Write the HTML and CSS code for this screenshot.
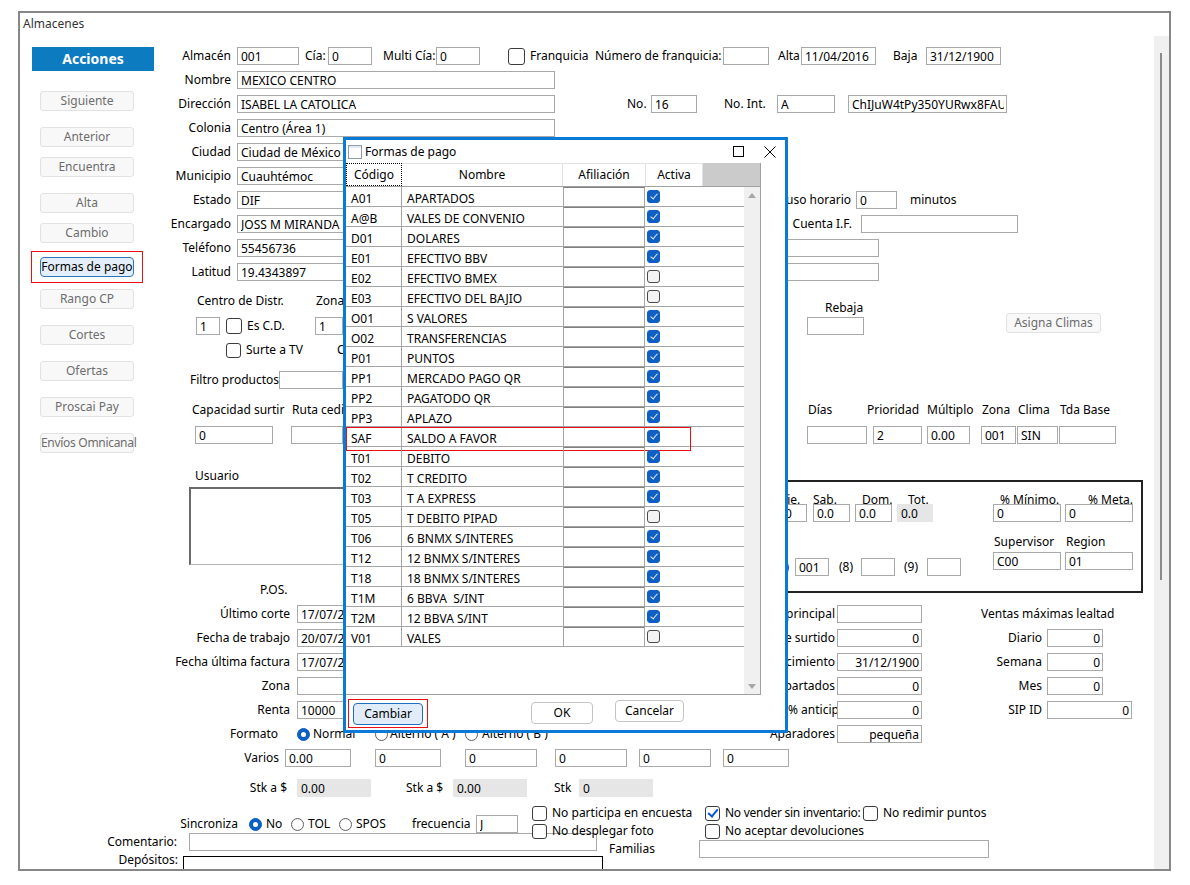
FILE: index.html
```html
<!DOCTYPE html>
<html>
  <head>
    <meta charset="utf-8" />
    <title>Almacenes</title>
    <link rel="stylesheet" href="styles.css">
  </head>
  <body>
    <div class="window">
      <div class="title">Almacenes</div>

      <div class="top">
        <!-- Left action column -->
        <div class="actions">
          <div class="actions-head">Acciones</div>
          <button class="act-btn mt20">Siguiente</button>
          <button class="act-btn mt16">Anterior</button>
          <button class="act-btn mt10">Encuentra</button>
          <button class="act-btn mt16">Alta</button>
          <button class="act-btn mt10">Cambio</button>
          <button class="act-btn focus mt14">Formas de pago</button>
          <button class="act-btn mt12">Rango CP</button>
          <button class="act-btn mt16">Cortes</button>
          <button class="act-btn mt16">Ofertas</button>
          <button class="act-btn mt16">Proscai Pay</button>
          <button class="act-btn tight mt16">Envíos Omnicanal</button>
        </div>

        <div class="form-top">
          <div class="row">
            <span class="lbl">Almacén</span>
            <input class="w62" value="001">
            <span class="txt ml6 w23">Cía:</span>
            <input class="w44" value="0">
            <span class="txt ml11 w53">Multi Cía:</span>
            <input class="w44" value="0">
            <span class="cb cb17 ml28"></span>
            <span class="txt ml5 w65">Franquicia</span>
            <span class="txt w128">Número de franquicia:</span>
            <input class="w46" value="">
            <span class="txt ml9 w23">Alta</span>
            <input class="w75" value="11/04/2016">
            <span class="txt ml17 w33">Baja</span>
            <input class="w75" value="31/12/1900">
          </div>
          <div class="row">
            <span class="lbl">Nombre</span>
            <input class="w318" value="MEXICO CENTRO">
          </div>
          <div class="row">
            <span class="lbl">Dirección</span>
            <input class="w318" value="ISABEL LA CATOLICA">
            <span class="txt ml72 w24">No.</span>
            <input class="w46" value="16">
            <span class="txt ml27 w53">No. Int.</span>
            <input class="w58" value="A">
            <input class="ml13 w159" value="ChIJuW4tPy350YURwx8FAUs">
          </div>
          <div class="row">
            <span class="lbl">Colonia</span>
            <input class="w318" value="Centro (Área 1)">
          </div>
          <div class="row">
            <span class="lbl">Ciudad</span>
            <input class="w220" value="Ciudad de México">
          </div>
          <div class="row">
            <span class="lbl">Municipio</span>
            <input class="w220" value="Cuauhtémoc">
          </div>
          <div class="row">
            <span class="lbl">Estado</span>
            <input class="w220" value="DIF">
            <span class="txt right w394">Huso horario</span>
            <input class="ml5 w41" value="0">
            <span class="txt ml13">minutos</span>
          </div>
          <div class="row">
            <span class="lbl">Encargado</span>
            <input class="w220" value="JOSS M MIRANDA">
            <span class="txt right w395">Cuenta I.F.</span>
            <input class="ml9 w157" value="">
          </div>
          <div class="row">
            <span class="lbl">Teléfono</span>
            <input class="w220" value="55456736">
            <input class="ml243 w179" value="">
          </div>
          <div class="row">
            <span class="lbl">Latitud</span>
            <input class="w220" value="19.4343897">
            <input class="ml243 w179" value="">
          </div>

          <div class="mid">
            <div class="mid-left">
              <div class="srow r-distr">
                <span class="txt ml27 w119">Centro de Distr.</span>
                <span class="txt">Zona</span>
              </div>
              <div class="srow r-cd">
                <input class="ml26 w24" value="1">
                <span class="cb cb16 ml6"></span>
                <span class="txt ml5 w68">Es C.D.</span>
                <input class="w28" value="1">
              </div>
              <div class="srow r-surte">
                <span class="cb ml56"></span>
                <span class="txt ml5 w91">Surte a TV</span>
                <span class="txt clip w6">C</span>
              </div>
              <div class="srow r-filtro">
                <span class="txt ml20 w89">Filtro productos</span>
                <input class="w64" value="">
              </div>
              <div class="srow r-caplbl">
                <span class="txt ml22 w100">Capacidad surtir</span>
                <span class="txt clip w51">Ruta cedis</span>
              </div>
              <div class="srow r-capin">
                <input class="ml25 w78" value="0">
                <input class="ml18 w52" value="">
              </div>
            </div>
            <div class="mid-right">
              <div class="srow r-rebaja">
                <span class="txt ml482">Rebaja</span>
              </div>
              <div class="srow r-rebin">
                <input class="ml464 w57 self-end" value="">
                <button class="act-btn asigna">Asigna Climas</button>
              </div>
              <div class="srow r-dias">
                <span class="txt ml465 w59">Días</span>
                <span class="txt w60">Prioridad</span>
                <span class="txt w55">Múltiplo</span>
                <span class="txt w36">Zona</span>
                <span class="txt w42">Clima</span>
                <span class="txt">Tda Base</span>
              </div>
              <div class="srow r-diasin">
                <input class="ml464 w60" value="">
                <input class="ml6 w49" value="2">
                <input class="ml5 w43" value="0.00">
                <input class="ml11 w35" value="001">
                <input class="ml1 w41" value="SIN">
                <input class="ml1 w57" value="">
              </div>
            </div>
          </div>

          <div class="usr">
            <div class="usr-left">
              <div class="usr-lbl">Usuario</div>
              <div class="usr-box"></div>
            </div>
            <div class="week-box">
              <div class="week-days">
                <div class="srow r-wlbl">
                  <span class="txt ml178 w33">Vie.</span>
                  <span class="txt w49">Sab.</span>
                  <span class="txt w46">Dom.</span>
                  <span class="txt">Tot.</span>
                </div>
                <div class="srow r-win">
                  <input class="ml169 w36" value="0.0">
                  <input class="ml6 w37" value="0.0">
                  <input class="ml5 w37" value="0.0">
                  <input class="ro ml5 w36" value="0.0">
                </div>
                <div class="srow r-w789">
                  <span class="txt ml173 w20">(7)</span>
                  <input class="w34" value="001">
                  <span class="txt ml10 w22">(8)</span>
                  <input class="w34" value="">
                  <span class="txt ml9 w23">(9)</span>
                  <input class="w34" value="">
                </div>
              </div>
              <div class="week-pct">
                <div class="srow r-wlbl">
                  <span class="txt ml7 w88">% Mínimo.</span>
                  <span class="txt">% Meta.</span>
                </div>
                <div class="srow r-win">
                  <input class="w68" value="0">
                  <input class="ml4 w68" value="0">
                </div>
                <div class="srow r-slbl">
                  <span class="txt ml1 w72">Supervisor</span>
                  <span class="txt">Region</span>
                </div>
                <div class="srow r-sin">
                  <input class="w68" value="C00">
                  <input class="ml4 w68" value="01">
                </div>
              </div>
            </div>
          </div>
        </div>
      </div>

      <!-- Punto de venta -->
      <div class="low">
        <div class="low-left">
          <div class="srow r-pos"><span class="txt ml240">P.OS.</span></div>
          <div class="row"><span class="rlbl w270">Último corte</span><input class="ml7 w90" value="17/07/2024"></div>
          <div class="row"><span class="rlbl w270">Fecha de trabajo</span><input class="ml7 w90" value="20/07/2024"></div>
          <div class="row"><span class="rlbl w270">Fecha última factura</span><input class="ml7 w90" value="17/07/2024"></div>
          <div class="row"><span class="rlbl w270">Zona</span><input class="ml7 w90" value=""></div>
          <div class="row"><span class="rlbl w270">Renta</span><input class="ml7 w90" value="10000"></div>
          <div class="row">
            <span class="rlbl w258">Formato</span>
            <span class="rd on ml19"></span><span class="txt ml3 w62">Normal</span>
            <span class="rd"></span><span class="txt ml2 w75">Alterno ( A )</span>
            <span class="rd"></span><span class="txt ml4">Alterno ( B )</span>
          </div>
        </div>
        <div class="low-mid">
          <div class="row"><span class="rlbl w75">Almacén principal</span><input class="ml2 w85" value=""></div>
          <div class="row"><span class="rlbl w75">Días de surtido</span><input class="num ml2 w85" value="0"></div>
          <div class="row"><span class="rlbl w75">Fecha de vencimiento</span><input class="num ml2 w85" value="31/12/1900"></div>
          <div class="row"><span class="rlbl w75">Apartados</span><input class="num ml2 w85" value="0"></div>
          <div class="row"><span class="rlbl over w75">% anticipo</span><input class="num ml2 w85" value="0"></div>
          <div class="row"><span class="rlbl w75">Aparadores</span><input class="num ml2 w85" value="pequeña"></div>
        </div>
        <div class="low-right">
          <div class="row"><span class="txt">Ventas máximas lealtad</span></div>
          <div class="row"><span class="rlbl w61">Diario</span><input class="num ml5 w56" value="0"></div>
          <div class="row"><span class="rlbl w61">Semana</span><input class="num ml5 w56" value="0"></div>
          <div class="row"><span class="rlbl w61">Mes</span><input class="num ml5 w56" value="0"></div>
          <div class="row"><span class="rlbl w61">SIP ID</span><input class="num ml5 w85" value="0"></div>
        </div>
      </div>

      <div class="row r-varios">
        <span class="rlbl w259">Varios</span>
        <input class="ml6 w66" value="0.00">
        <input class="ml24 w66" value="0">
        <input class="ml24 w72" value="0">
        <input class="ml18 w72" value="0">
        <input class="ml12 w72" value="0">
        <input class="ml12 w66" value="0">
      </div>
      <div class="srow r-stk">
        <span class="rlbl w267">Stk a $</span>
        <input class="ro ml10 w74" value="0.00">
        <span class="txt ml35 w47">Stk a $</span>
        <input class="ro w74" value="0.00">
        <span class="txt ml27 w25">Stk</span>
        <input class="ro w74" value="0">
      </div>

      <div class="bot">
        <div class="bot-left">
          <div class="srow r-sinc">
            <span class="rlbl w218">Sincroniza</span>
            <span class="rd on ml11"></span><span class="txt ml4 w25">No</span>
            <span class="rd"></span><span class="txt ml4 w31">TOL</span>
            <span class="rd"></span><span class="txt ml4 w56">SPOS</span>
            <span class="txt w64">frecuencia</span>
            <input class="w42" value="J">
          </div>
          <div class="srow r-coment">
            <span class="rlbl w157">Comentario:</span>
            <input class="ml12 w408" value="">
          </div>
          <div class="srow r-depo">
            <span class="rlbl w158 depo-lbl">Depósitos:</span>
            <div class="depo-box"></div>
          </div>
        </div>
        <div class="bot-right">
          <div class="srow r-chk1">
            <span class="cb"></span>
            <span class="txt ml5 w153">No participa en encuesta</span>
            <span class="cb on"></span>
            <span class="txt narrow ml5 w138">No vender sin inventario:</span>
            <span class="cb"></span>
            <span class="txt ml5">No redimir puntos</span>
          </div>
          <div class="srow r-chk2">
            <span class="cb"></span>
            <span class="txt ml5 w153">No desplegar foto</span>
            <span class="cb"></span>
            <span class="txt ml5">No aceptar devoluciones</span>
          </div>
          <div class="srow r-fam">
            <span class="txt ml77 w90">Familias</span>
            <input class="w290" value="">
          </div>
        </div>
      </div>

      <div class="vbar"></div>

      <!-- Formas de pago dialog -->
      <div class="dialog">
        <div class="dlg-title">
          <svg class="dlg-icon" width="14" height="14" viewBox="0 0 14 14">
            <rect x="0.5" y="0.5" width="13" height="13" fill="#fdfdfd" stroke="#8d9bb0" />
            <rect x="1" y="1" width="12" height="2" fill="#e4eaf2" />
          </svg>
          <span class="dlg-name">Formas de pago</span>
          <svg class="dlg-max" width="11" height="11" viewBox="0 0 11 11">
            <rect x="0.5" y="0.5" width="10" height="10" fill="none" stroke="#000" />
          </svg>
          <svg class="dlg-close" width="12" height="12" viewBox="0 0 12 12">
            <path d="M0.5 0.5 L11.5 11.5 M11.5 0.5 L0.5 11.5" stroke="#000" stroke-width="1" fill="none" />
          </svg>
        </div>
        <div class="grid">
          <div class="grid-head">
            <div class="gh gh-code">Código</div>
            <div class="gh gh-name">Nombre</div>
            <div class="gh gh-afil">Afiliación</div>
            <div class="gh gh-act">Activa</div>
            <div class="gh-fill"></div>
          </div>
          <div class="grid-body">
            <div class="grid-rows">
              <div class="grow"><span class="gc-code">A01</span><span class="gc-name">APARTADOS</span><span class="gc-afil"></span><span class="gc-act"><span class="gcb on"></span></span></div>
              <div class="grow"><span class="gc-code">A@B</span><span class="gc-name">VALES DE CONVENIO</span><span class="gc-afil"></span><span class="gc-act"><span class="gcb on"></span></span></div>
              <div class="grow"><span class="gc-code">D01</span><span class="gc-name">DOLARES</span><span class="gc-afil"></span><span class="gc-act"><span class="gcb on"></span></span></div>
              <div class="grow"><span class="gc-code">E01</span><span class="gc-name">EFECTIVO BBV</span><span class="gc-afil"></span><span class="gc-act"><span class="gcb on"></span></span></div>
              <div class="grow"><span class="gc-code">E02</span><span class="gc-name">EFECTIVO BMEX</span><span class="gc-afil"></span><span class="gc-act"><span class="gcb"></span></span></div>
              <div class="grow"><span class="gc-code">E03</span><span class="gc-name">EFECTIVO DEL BAJIO</span><span class="gc-afil"></span><span class="gc-act"><span class="gcb"></span></span></div>
              <div class="grow"><span class="gc-code">O01</span><span class="gc-name">S VALORES</span><span class="gc-afil"></span><span class="gc-act"><span class="gcb on"></span></span></div>
              <div class="grow"><span class="gc-code">O02</span><span class="gc-name">TRANSFERENCIAS</span><span class="gc-afil"></span><span class="gc-act"><span class="gcb on"></span></span></div>
              <div class="grow"><span class="gc-code">P01</span><span class="gc-name">PUNTOS</span><span class="gc-afil"></span><span class="gc-act"><span class="gcb on"></span></span></div>
              <div class="grow"><span class="gc-code">PP1</span><span class="gc-name">MERCADO PAGO QR</span><span class="gc-afil"></span><span class="gc-act"><span class="gcb on"></span></span></div>
              <div class="grow"><span class="gc-code">PP2</span><span class="gc-name">PAGATODO QR</span><span class="gc-afil"></span><span class="gc-act"><span class="gcb on"></span></span></div>
              <div class="grow"><span class="gc-code">PP3</span><span class="gc-name">APLAZO</span><span class="gc-afil"></span><span class="gc-act"><span class="gcb on"></span></span></div>
              <div class="grow marked"><span class="gc-code">SAF</span><span class="gc-name">SALDO A FAVOR</span><span class="gc-afil"></span><span class="gc-act"><span class="gcb on"></span></span></div>
              <div class="grow"><span class="gc-code">T01</span><span class="gc-name">DEBITO</span><span class="gc-afil"></span><span class="gc-act"><span class="gcb on"></span></span></div>
              <div class="grow"><span class="gc-code">T02</span><span class="gc-name">T CREDITO</span><span class="gc-afil"></span><span class="gc-act"><span class="gcb on"></span></span></div>
              <div class="grow"><span class="gc-code">T03</span><span class="gc-name">T A EXPRESS</span><span class="gc-afil"></span><span class="gc-act"><span class="gcb on"></span></span></div>
              <div class="grow"><span class="gc-code">T05</span><span class="gc-name">T DEBITO PIPAD</span><span class="gc-afil"></span><span class="gc-act"><span class="gcb"></span></span></div>
              <div class="grow"><span class="gc-code">T06</span><span class="gc-name">6 BNMX S/INTERES</span><span class="gc-afil"></span><span class="gc-act"><span class="gcb on"></span></span></div>
              <div class="grow"><span class="gc-code">T12</span><span class="gc-name">12 BNMX S/INTERES</span><span class="gc-afil"></span><span class="gc-act"><span class="gcb on"></span></span></div>
              <div class="grow"><span class="gc-code">T18</span><span class="gc-name">18 BNMX S/INTERES</span><span class="gc-afil"></span><span class="gc-act"><span class="gcb on"></span></span></div>
              <div class="grow"><span class="gc-code">T1M</span><span class="gc-name">6 BBVA&nbsp; S/INT</span><span class="gc-afil"></span><span class="gc-act"><span class="gcb on"></span></span></div>
              <div class="grow"><span class="gc-code">T2M</span><span class="gc-name">12 BBVA S/INT</span><span class="gc-afil"></span><span class="gc-act"><span class="gcb on"></span></span></div>
              <div class="grow"><span class="gc-code">V01</span><span class="gc-name">VALES</span><span class="gc-afil"></span><span class="gc-act"><span class="gcb"></span></span></div>
            </div>
            <div class="vscroll"><span class="arr-up"></span><span class="arr-down"></span></div>
          </div>
        </div>
        <div class="dlg-btns">
          <button class="dbtn cambiar">Cambiar</button>
          <button class="dbtn ok">OK</button>
          <button class="dbtn cancelar">Cancelar</button>
        </div>
      </div>
    </div>
  </body>
</html>
```

FILE: styles.css
```css
* {
  box-sizing: border-box;
}

body {
  margin: 0;
  font-family: "Noto Sans", "DejaVu Sans", sans-serif;
  font-size: 12px;
  line-height: 16px;
  color: #000;
  background: #fff;
}

.window {
  position: relative;
  width: 1153px;
  height: 860px;
  margin: 11px 0 0 18px;
  border: 2px solid #878787;
  overflow: hidden;
}

.title {
  height: 31px;
  padding: 3px 0 0 3px;
  color: #333;
}

/* Top part: actions + main form */
.top {
  display: flex;
  height: 539px;
}

.actions {
  flex: none;
  width: 150px;
  padding-top: 3px;
}

.actions-head {
  margin-left: 12px;
  width: 122px;
  height: 24px;
  line-height: 24px;
  background: #0c7bbf;
  color: #fff;
  font-weight: bold;
  font-size: 14px;
  text-align: center;
}

.act-btn {
  display: block;
  margin-left: 20px;
  width: 94px;
  height: 20px;
  padding: 0;
  font: inherit;
  line-height: 18px;
  color: #6d6d6d;
  background: #f8f8f8;
  border: 1px solid #e2e2e2;
  border-radius: 3px;
  white-space: nowrap;
}

.act-btn.tight {
  letter-spacing: -0.3px;
}

.act-btn.focus {
  position: relative;
  color: #000;
  background: #e3eefa;
  border-color: #2f77bd;
  border-radius: 4px;
}

.act-btn.focus::after {
  content: "";
  position: absolute;
  left: -10px;
  right: -10px;
  top: -7px;
  bottom: -7px;
  border: 1px solid #e81010;
}

.act-btn.asigna {
  margin-left: 142px;
  width: 95px;
  align-self: flex-start;
}

.form-top {
  flex: 1;
}

.row {
  display: flex;
  align-items: center;
  height: 24px;
  white-space: nowrap;
}

.srow {
  display: flex;
  align-items: center;
  white-space: nowrap;
}

.row > *,
.srow > * {
  flex: none;
}

.lbl {
  width: 61px;
  margin-right: 6px;
  text-align: right;
}

.txt {
  display: block;
}

.txt.right {
  text-align: right;
}

.txt.clip {
  overflow: hidden;
}

.txt.narrow {
  letter-spacing: -0.25px;
}

.rlbl {
  display: flex;
  justify-content: flex-end;
  white-space: nowrap;
}

.rlbl.over {
  justify-content: flex-start;
  padding-left: 28px;
}

input {
  height: 18px;
  margin: 0;
  padding: 0 2px 0 3px;
  font: inherit;
  color: #000;
  background: #fff;
  border: 1px solid #a9a9a9;
  border-radius: 0;
  outline: none;
}

input.num {
  text-align: right;
  padding-right: 2px;
}

input.ro {
  background: #e6e6e6;
  border-color: #e6e6e6;
}

.self-end {
  align-self: flex-end;
}

/* Checkboxes and radios */
.cb {
  position: relative;
  display: block;
  width: 15px;
  height: 15px;
  border: 1.5px solid #3c3c3c;
  border-radius: 3px;
  background: #fff;
}

.cb16 {
  width: 16px;
  height: 16px;
}

.cb17 {
  width: 17px;
  height: 17px;
}

.cb.on::after {
  content: "";
  position: absolute;
  left: 4px;
  top: 0px;
  width: 4px;
  height: 8px;
  border: solid #0a56d0;
  border-width: 0 2px 2px 0;
  transform: rotate(40deg);
}

.rd {
  position: relative;
  display: block;
  width: 13px;
  height: 13px;
  border: 1px solid #5e5e5e;
  border-radius: 50%;
  background: #fff;
}

.rd.on {
  background: #0e5fc3;
  border-color: #0e5fc3;
}

.rd.on::after {
  content: "";
  position: absolute;
  left: 3px;
  top: 3px;
  width: 5px;
  height: 5px;
  border-radius: 50%;
  background: #fff;
}

/* Middle block */
.mid {
  display: flex;
  height: 166px;
}

.mid-left {
  flex: none;
  width: 173px;
}

.mid-right {
  flex: 1;
}

.r-distr { margin-top: 8px; height: 18px; }
.r-cd { margin-top: 7px; height: 18px; }
.r-surte { margin-top: 7px; height: 16px; }
.r-filtro { margin-top: 13px; height: 18px; }
.r-caplbl { margin-top: 13px; height: 16px; }
.r-capin { margin-top: 8px; height: 18px; }

.r-rebaja { margin-top: 16px; height: 16px; }
.r-rebin { margin-top: -3px; height: 22px; }
.r-dias { margin-top: 67px; height: 16px; }
.r-diasin { margin-top: 8px; height: 18px; }

/* Usuario + semana */
.usr {
  display: flex;
  height: 133px;
}

.usr-left {
  flex: none;
  width: 430px;
}

.usr-lbl {
  margin: 18px 0 0 25px;
}

.usr-box {
  margin: 3px 0 0 19px;
  width: 300px;
  height: 78px;
  border: 1px solid #b5b5b5;
  border-top: 2px solid #6a6a6a;
  border-left: 2px solid #6a6a6a;
}

.week-box {
  display: flex;
  flex: none;
  width: 543px;
  height: 113px;
  margin-top: 30px;
  border: 2px solid #222;
}

.week-days {
  flex: none;
  width: 391px;
}

.week-pct {
  flex: none;
  width: 148px;
}

.r-wlbl { margin-top: 11px; height: 14px; }
.r-win { margin-top: -3px; height: 18px; }
.r-w789 { margin-top: 36px; height: 18px; }
.r-slbl { margin-top: 13px; height: 14px; }
.r-sin { margin-top: 3px; height: 18px; }

/* Lower block */
.low {
  display: flex;
  height: 162px;
}

.low-left {
  flex: none;
  width: 740px;
}

.low-mid {
  flex: none;
  width: 221px;
  padding-top: 19px;
}

.low-right {
  flex: 1;
  padding-top: 19px;
}

.r-pos {
  margin-top: -1px;
  margin-bottom: 4px;
  height: 16px;
}

.r-varios { margin-top: 1px; }
.r-stk { margin-top: 9px; height: 18px; }

.bot {
  display: flex;
}

.bot-left {
  flex: none;
  width: 512px;
}

.bot-right {
  flex: 1;
}

.r-sinc { margin-top: 18px; height: 18px; }
.r-coment { height: 18px; }
.r-depo { margin-top: 5px; align-items: flex-start; }
.depo-lbl { margin-top: -4px; }

.depo-box {
  margin-left: 5px;
  width: 420px;
  height: 40px;
  border: 1px solid #000;
}

.r-chk1 { margin-top: 8px; height: 16px; }
.r-chk2 { margin-top: 2px; height: 16px; }
.r-fam { margin-top: 1px; height: 18px; }

.vbar {
  position: absolute;
  right: 0;
  top: 23px;
  bottom: 0;
  width: 15px;
  background: #f0f0f0;
}

.vbar::after {
  content: "";
  position: absolute;
  left: 6px;
  top: 17px;
  width: 2px;
  height: 527px;
  background: #8a8a8a;
}

/* Dialog */
.dialog {
  position: absolute;
  left: 323px;
  top: 124px;
  z-index: 5;
  width: 445px;
  height: 596px;
  border: 3px solid #0b79d6;
  background: #fff;
}

.dlg-title {
  display: flex;
  align-items: center;
  height: 23px;
}

.dlg-icon {
  flex: none;
  margin-left: 2px;
}

.dlg-name {
  margin-left: 3px;
}

.dlg-max {
  margin-left: auto;
}

.dlg-close {
  margin-left: 20px;
  margin-right: 9px;
}

.grid {
  width: 415px;
  height: 532px;
  border-right: 1px solid #a0a0a0;
  border-bottom: 1px solid #a0a0a0;
}

.grid-head {
  display: flex;
  height: 24px;
  border-bottom: 1px solid #a0a0a0;
}

.gh {
  height: 23px;
  line-height: 21px;
  text-align: center;
  border-top: 1px solid #e2e2e2;
  border-right: 1px solid #e2e2e2;
}

.gh-code {
  width: 56px;
  border: 1px dotted #000;
}

.gh-name { width: 161px; }
.gh-afil { width: 83px; }
.gh-act { width: 57px; }

.gh-fill {
  width: 57px;
  background: #cbcbcb;
}

.grid-body {
  display: flex;
  height: 507px;
}

.grid-rows {
  width: 398px;
}

.grow {
  position: relative;
  display: flex;
  height: 20px;
  border-bottom: 1px solid #a5a5a5;
  line-height: 16px;
}

.grow > span {
  flex: none;
}

.gc-code {
  width: 56px;
  padding: 4px 0 0 5px;
  border-right: 1px solid #a5a5a5;
}

.gc-name {
  width: 161px;
  padding: 4px 0 0 5px;
  white-space: pre;
}

.gc-afil {
  width: 82px;
  border-left: 1px solid #a5a5a5;
  border-right: 1px solid #a5a5a5;
  border-top: 1px solid #808080;
}

.gc-act {
  width: 99px;
  padding: 3px 0 0 2px;
}

.grow.marked::after {
  content: "";
  position: absolute;
  left: 0;
  top: 0;
  width: 343px;
  height: 22px;
  border: 1px solid #e81010;
}

.gcb {
  position: relative;
  display: block;
  width: 13px;
  height: 13px;
  border: 1px solid #4a4a4a;
  border-radius: 3px;
  background: #f3f3f3;
}

.gcb.on {
  background: #0e60c4;
  border-color: #0e60c4;
}

.gcb.on::after {
  content: "";
  position: absolute;
  left: 3.5px;
  top: 1px;
  width: 3px;
  height: 6px;
  border: solid #dfe9f7;
  border-width: 0 1px 1px 0;
  transform: rotate(40deg);
}

.vscroll {
  position: relative;
  width: 16px;
  background: #f0f0f0;
}

.arr-up,
.arr-down {
  position: absolute;
  left: 4px;
  width: 0;
  height: 0;
  border-left: 4px solid transparent;
  border-right: 4px solid transparent;
}

.arr-up {
  top: 6px;
  border-bottom: 5px solid #a6a6a6;
}

.arr-down {
  bottom: 5px;
  border-top: 5px solid #a6a6a6;
}

.dlg-btns {
  display: flex;
  align-items: flex-start;
  height: 35px;
}

.dbtn {
  height: 22px;
  padding: 0;
  font: inherit;
  line-height: 20px;
  color: #000;
  background: #fff;
  border: 1px solid #c4c4c4;
  border-radius: 4px;
}

.dbtn.cambiar {
  position: relative;
  margin: 8px 0 0 7px;
  width: 70px;
  background: #e0ecf9;
  border-color: #1f6fc0;
}

.dbtn.cambiar::after {
  content: "";
  position: absolute;
  left: -6px;
  right: -6px;
  top: -5px;
  bottom: -4px;
  border: 1px solid #e81010;
}

.dbtn.ok {
  margin: 7px 0 0 108px;
  width: 62px;
}

.dbtn.cancelar {
  margin: 5px 0 0 22px;
  width: 69px;
}

/* spacing helpers */
.mt10 { margin-top: 10px; }
.mt12 { margin-top: 12px; }
.mt14 { margin-top: 14px; }
.mt16 { margin-top: 16px; }
.mt20 { margin-top: 20px; }

.ml1 { margin-left: 1px; }
.ml2 { margin-left: 2px; }
.ml3 { margin-left: 3px; }
.ml4 { margin-left: 4px; }
.ml5 { margin-left: 5px; }
.ml6 { margin-left: 6px; }
.ml7 { margin-left: 7px; }
.ml9 { margin-left: 9px; }
.ml10 { margin-left: 10px; }
.ml11 { margin-left: 11px; }
.ml12 { margin-left: 12px; }
.ml13 { margin-left: 13px; }
.ml17 { margin-left: 17px; }
.ml18 { margin-left: 18px; }
.ml19 { margin-left: 19px; }
.ml20 { margin-left: 20px; }
.ml22 { margin-left: 22px; }
.ml24 { margin-left: 24px; }
.ml25 { margin-left: 25px; }
.ml26 { margin-left: 26px; }
.ml27 { margin-left: 27px; }
.ml28 { margin-left: 28px; }
.ml35 { margin-left: 35px; }
.ml56 { margin-left: 56px; }
.ml72 { margin-left: 72px; }
.ml77 { margin-left: 77px; }
.ml169 { margin-left: 169px; }
.ml173 { margin-left: 173px; }
.ml178 { margin-left: 178px; }
.ml240 { margin-left: 240px; }
.ml243 { margin-left: 243px; }
.ml464 { margin-left: 464px; }
.ml465 { margin-left: 465px; }
.ml482 { margin-left: 482px; }

.w6 { width: 6px; }
.w20 { width: 20px; }
.w22 { width: 22px; }
.w23 { width: 23px; }
.w24 { width: 24px; }
.w25 { width: 25px; }
.w28 { width: 28px; }
.w31 { width: 31px; }
.w33 { width: 33px; }
.w34 { width: 34px; }
.w35 { width: 35px; }
.w36 { width: 36px; }
.w37 { width: 37px; }
.w41 { width: 41px; }
.w42 { width: 42px; }
.w43 { width: 43px; }
.w44 { width: 44px; }
.w46 { width: 46px; }
.w47 { width: 47px; }
.w49 { width: 49px; }
.w51 { width: 51px; }
.w52 { width: 52px; }
.w53 { width: 53px; }
.w55 { width: 55px; }
.w56 { width: 56px; }
.w57 { width: 57px; }
.w58 { width: 58px; }
.w59 { width: 59px; }
.w60 { width: 60px; }
.w61 { width: 61px; }
.w62 { width: 62px; }
.w64 { width: 64px; }
.w65 { width: 65px; }
.w66 { width: 66px; }
.w68 { width: 68px; }
.w72 { width: 72px; }
.w74 { width: 74px; }
.w75 { width: 75px; }
.w78 { width: 78px; }
.w80 { width: 80px; }
.w85 { width: 85px; }
.w88 { width: 88px; }
.w89 { width: 89px; }
.w90 { width: 90px; }
.w91 { width: 91px; }
.w100 { width: 100px; }
.w119 { width: 119px; }
.w120 { width: 120px; }
.w128 { width: 128px; }
.w138 { width: 138px; }
.w153 { width: 153px; }
.w157 { width: 157px; }
.w158 { width: 158px; }
.w159 { width: 159px; }
.w179 { width: 179px; }
.w218 { width: 218px; }
.w220 { width: 220px; }
.w258 { width: 258px; }
.w259 { width: 259px; }
.w267 { width: 267px; }
.w270 { width: 270px; }
.w290 { width: 290px; }
.w318 { width: 318px; }
.w394 { width: 394px; }
.w395 { width: 395px; }
.w408 { width: 408px; }
```
